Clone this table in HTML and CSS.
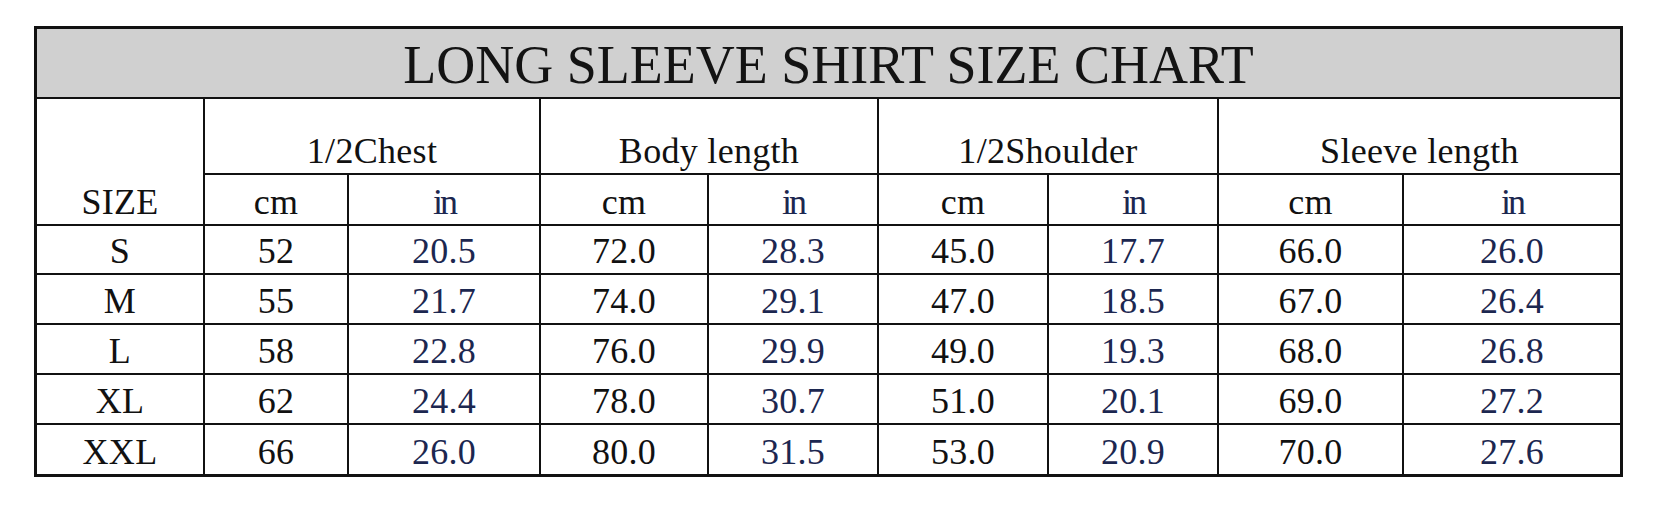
FILE: index.html
```html
<!DOCTYPE html>
<html lang="en">
<head>
<meta charset="utf-8">
<title>Long Sleeve Shirt Size Chart</title>
<link rel="stylesheet" href="styles.css">
</head>
<body>
<div class="page">
  <div class="chart">
    <div class="cell title">LONG SLEEVE SHIRT SIZE CHART</div>

    <div class="cell size-head">SIZE</div>
    <div class="cell group">1/2Chest</div>
    <div class="cell group">Body length</div>
    <div class="cell group">1/2Shoulder</div>
    <div class="cell group">Sleeve length</div>

    <div class="cell unit">cm</div><div class="cell unit in">in</div>
    <div class="cell unit">cm</div><div class="cell unit in">in</div>
    <div class="cell unit">cm</div><div class="cell unit in">in</div>
    <div class="cell unit">cm</div><div class="cell unit in">in</div>

    <div class="cell">S</div>
    <div class="cell">52</div><div class="cell inch">20.5</div>
    <div class="cell">72.0</div><div class="cell inch">28.3</div>
    <div class="cell">45.0</div><div class="cell inch">17.7</div>
    <div class="cell">66.0</div><div class="cell inch">26.0</div>

    <div class="cell">M</div>
    <div class="cell">55</div><div class="cell inch">21.7</div>
    <div class="cell">74.0</div><div class="cell inch">29.1</div>
    <div class="cell">47.0</div><div class="cell inch">18.5</div>
    <div class="cell">67.0</div><div class="cell inch">26.4</div>

    <div class="cell">L</div>
    <div class="cell">58</div><div class="cell inch">22.8</div>
    <div class="cell">76.0</div><div class="cell inch">29.9</div>
    <div class="cell">49.0</div><div class="cell inch">19.3</div>
    <div class="cell">68.0</div><div class="cell inch">26.8</div>

    <div class="cell">XL</div>
    <div class="cell">62</div><div class="cell inch">24.4</div>
    <div class="cell">78.0</div><div class="cell inch">30.7</div>
    <div class="cell">51.0</div><div class="cell inch">20.1</div>
    <div class="cell">69.0</div><div class="cell inch">27.2</div>

    <div class="cell">XXL</div>
    <div class="cell">66</div><div class="cell inch">26.0</div>
    <div class="cell">80.0</div><div class="cell inch">31.5</div>
    <div class="cell">53.0</div><div class="cell inch">20.9</div>
    <div class="cell">70.0</div><div class="cell inch">27.6</div>
  </div>
</div>
</body>
</html>
```

FILE: styles.css
```css
html, body {
  margin: 0;
  padding: 0;
  background: #ffffff;
}

.page {
  padding: 26px 0 0 34px;
}

.chart {
  display: grid;
  width: 1583px;
  grid-template-columns: 166px 142px 190px 166px 168px 168px 168px 183px 216px;
  grid-template-rows: 68px 74px 49px 47px 48px 48px 48px 49px;
  gap: 2px;
  border: 3px solid #111111;
  background: #111111;
  font-family: "Liberation Serif", "Times New Roman", serif;
  color: #111111;
}

.cell {
  background: #ffffff;
  display: flex;
  justify-content: center;
  align-items: flex-end;
  padding-bottom: 4px;
  font-size: 36px;
  letter-spacing: 0.3px;
  line-height: 1;
  box-sizing: border-box;
}

.title {
  grid-column: 1 / -1;
  background: #d0d0d0;
  font-size: 54px;
  letter-spacing: 0;
  align-items: center;
  padding: 4px 0 0 0;
  color: #131313;
}

.size-head {
  grid-row: span 2;
}

.group {
  grid-column: span 2;
}

.unit.in {
  color: #1c2750;
  letter-spacing: -3px;
}

.inch {
  color: #1c2750;
}
```
